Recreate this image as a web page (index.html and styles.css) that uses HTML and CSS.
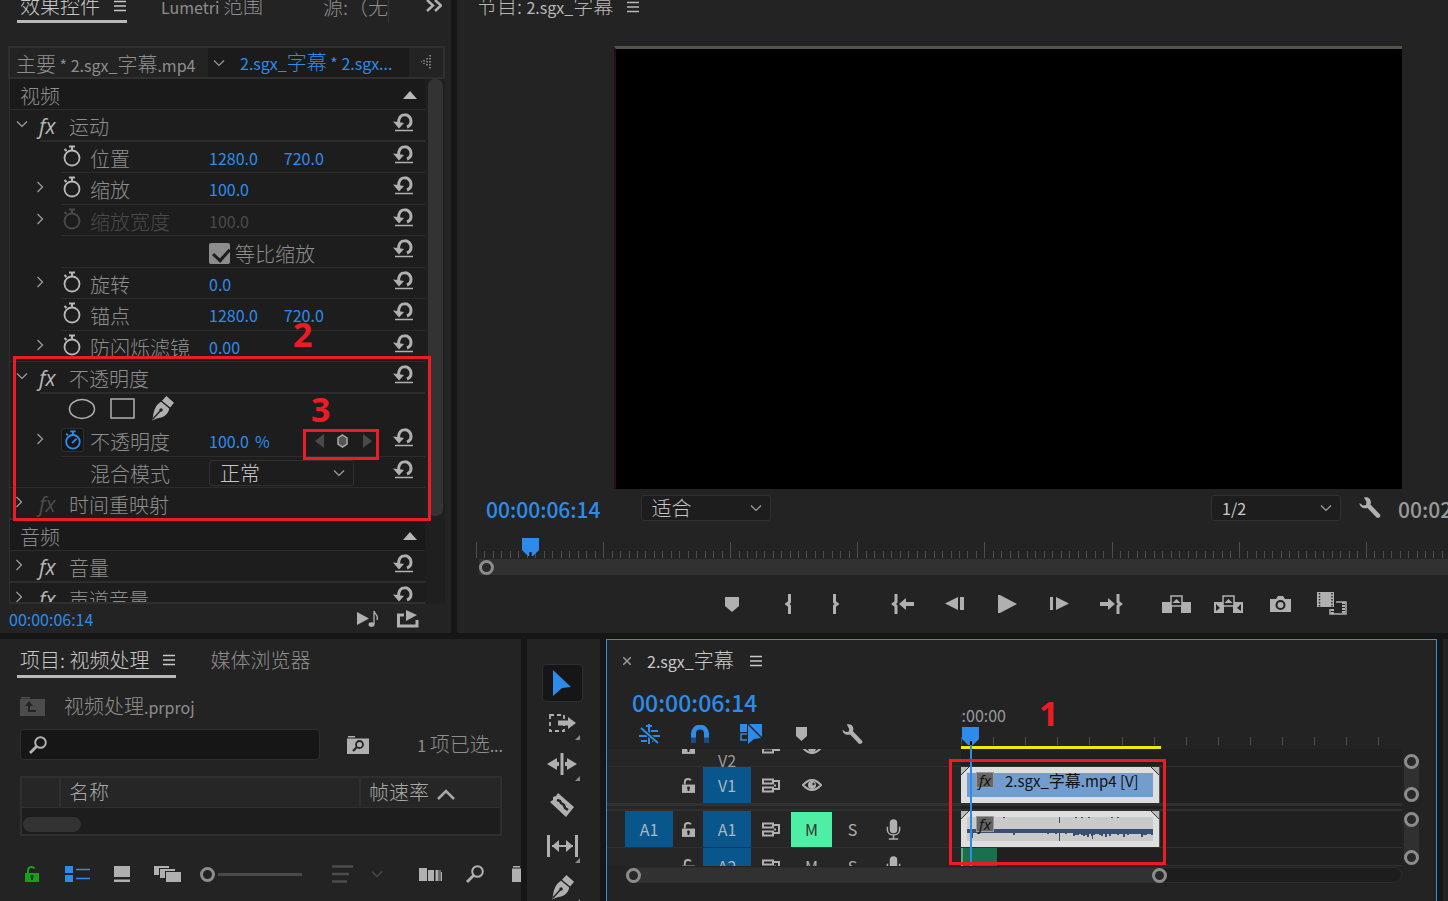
FILE: index.html
```html
<!DOCTYPE html>
<html lang="zh-CN">
<head>
  <meta charset="UTF-8" />
  <meta name="viewport" content="width=device-width, initial-scale=1.0">
  <title>视频处理</title>
  <link rel="stylesheet" href="styles.css">
</head>
<body>
  <svg class="defs" aria-hidden="true">
    <symbol id="reset" viewBox="0 0 20 19">
      <path d="M5.500 10C5.500 4.500 8 1.800 11.500 1.800a6.300 6.300 0 0 1 6.500 6.500c0 3-1.500 4.800-4 5.700" fill="none" stroke="currentColor" stroke-width="3"/>
      <path d="M0 8.500l5 .5 6 1-5 5.500z" fill="currentColor"/>
      <path d="M2 17.500h18" stroke="currentColor" stroke-width="1.500"/>
    </symbol>
    <symbol id="watch" viewBox="0 0 19 22">
      <circle cx="10" cy="13" r="7.500" fill="none" stroke="currentColor" stroke-width="1.800"/>
      <path d="M7 1.500h6M10 1.500v4M2.500 4l2 2" stroke="currentColor" stroke-width="2"/>
    </symbol>
    <symbol id="watch-on" viewBox="0 0 19 22">
      <circle cx="10" cy="13" r="7.500" fill="none" stroke="currentColor" stroke-width="2"/>
      <path d="M7 1.500h6M10 1.500v4M2.500 4l2 2M9 14.500l5-5" stroke="currentColor" stroke-width="2"/>
    </symbol>
    <symbol id="menu" viewBox="0 0 12 12">
      <path d="M0 1.500h12M0 6h12M0 10.500h12" stroke="currentColor" stroke-width="1.500"/>
    </symbol>
    <symbol id="down" viewBox="0 0 12 12">
      <path d="M1 3.500l5 5 5-5" fill="none" stroke="currentColor" stroke-width="1.200"/>
    </symbol>
    <symbol id="right" viewBox="0 0 12 12">
      <path d="M3.500 1l5 5-5 5" fill="none" stroke="currentColor" stroke-width="1.200"/>
    </symbol>
    <symbol id="up" viewBox="0 0 14 8"><path d="M7 0l7 8H0z" fill="currentColor"/></symbol>
    <symbol id="pen" viewBox="0 0 26 26">
      <path d="M17 0l8 7-4 5-8.500-7z" fill="currentColor"/>
      <path d="M11.500 6l8.500 7c-1 6-5 9-11.500 10L2 25.500l1-3.500c1-7 3-13 8.500-16z" fill="currentColor"/>
      <path d="M2.500 24.500l8.500-9.500" stroke="#232323" stroke-width="1.500"/>
      <circle cx="11.500" cy="14.500" r="1.800" fill="#232323"/>
    </symbol>
    <symbol id="search" viewBox="0 0 18 18">
      <circle cx="11.500" cy="6.500" r="5.300" fill="none" stroke="currentColor" stroke-width="2"/>
      <path d="M7.500 10.500L1 17" stroke="currentColor" stroke-width="2.800"/>
    </symbol>
    <symbol id="marker" viewBox="0 0 14 15"><path d="M0 0h14v9l-7 6-7-6z" fill="currentColor"/></symbol>
    <symbol id="wrench" viewBox="0 0 22 22">
      <path d="M5 .5C10-.5 13 3 11.500 7.500L21 17.500c1.500 2-1.500 4.500-3.500 3L8.500 11C4.500 12 .5 10 .5 6l3.500 2.500 3-.5.500-3z" fill="currentColor"/>
    </symbol>
    <symbol id="lock" viewBox="0 0 14 16">
      <path d="M3 7V4.500C3 2 4.500 1 6.500 1c1.500 0 2.500.500 3 1.500" fill="none" stroke="currentColor" stroke-width="2"/>
      <path d="M0 7h14v9H0z" fill="currentColor"/>
      <path d="M7 9v5M5.500 10.500h3" stroke="#222" stroke-width="2"/>
    </symbol>
    <symbol id="sync" viewBox="0 0 18 15">
      <path d="M1 1.500h10v4H1zM1 9.500h10v4H1z" fill="none" stroke="currentColor" stroke-width="2"/>
      <path d="M12 3h5v8h-5M12 7.500h2" fill="none" stroke="currentColor" stroke-width="2"/>
    </symbol>
    <symbol id="eye" viewBox="0 0 20 12">
      <path d="M1 6q9-10 18 0-9 10-18 0z" fill="none" stroke="currentColor" stroke-width="2"/>
      <circle cx="10" cy="6" r="4" fill="currentColor"/><circle cx="11.500" cy="5" r="1.200" fill="#222"/>
    </symbol>
    <symbol id="mic" viewBox="0 0 16 22">
      <rect x="4" y="0" width="8" height="15" rx="4" fill="currentColor"/>
      <path d="M1.500 8v3.500c0 7 13 7 13 0V8M8 17v3.500M3 21h10" fill="none" stroke="currentColor" stroke-width="1.600"/>
    </symbol>
  </svg>

  <main class="workspace">
    <div class="row row-top">
      <section class="panel effects">
        <div class="tabs tabs-cut">
          <a class="tab active" href="#"><span class="cn">效果控件</span><svg class="i12"><use href="#menu"/></svg></a>
          <a class="tab tab-lumetri" href="#"><span>Lumetri <span class="cn">范围</span></span></a>
          <a class="tab tab-source" href="#"><span class="cn">源:（无</span></a>
          <button class="more" aria-label="更多"><svg width="16" height="12" viewBox="0 0 16 12"><path d="M1 0l6 5.500L1 11M9 0l6 5.500L9 11" fill="none" stroke="currentColor" stroke-width="2.500"/></svg></button>
        </div>
        <div class="clip-bar">
          <span class="clip-master"><span class="cn">主要</span> * 2.sgx_<span class="cn">字幕</span>.mp4</span>
          <span class="clip-current"><svg class="i12"><use href="#down"/></svg><span>2.sgx_<span class="cn">字幕</span> * 2.sgx...</span></span>
          <span class="clip-more"><svg width="10" height="14" viewBox="0 0 10 14"><path d="M9 0v14M6 3v8M3 5v4M0 6v2" stroke="#999" stroke-width="1.500" stroke-dasharray="1.500 1.500"/></svg></span>
        </div>
        <div class="list-wrap">
          <div class="list">
            <div class="item head"><span class="cn">视频</span><svg class="tri"><use href="#up"/></svg></div>
            <div class="item fx"><svg class="tw"><use href="#down"/></svg><i>fx</i><span class="cn">运动</span><button class="rs" aria-label="重置"><svg><use href="#reset"/></svg></button></div>
            <div class="item prop"><span></span><svg class="sw"><use href="#watch"/></svg><span class="cn">位置</span><span class="vals"><a href="#">1280.0</a><a href="#">720.0</a></span><button class="rs" aria-label="重置"><svg><use href="#reset"/></svg></button></div>
            <div class="item prop"><svg class="tw"><use href="#right"/></svg><svg class="sw"><use href="#watch"/></svg><span class="cn">缩放</span><span class="vals"><a href="#">100.0</a></span><button class="rs" aria-label="重置"><svg><use href="#reset"/></svg></button></div>
            <div class="item prop off"><svg class="tw"><use href="#right"/></svg><svg class="sw"><use href="#watch"/></svg><span class="cn">缩放宽度</span><span class="vals">100.0</span><button class="rs" aria-label="重置"><svg><use href="#reset"/></svg></button></div>
            <div class="item prop"><span></span><span></span><span></span><label class="check"><input type="checkbox" checked><span class="cn">等比缩放</span></label><button class="rs" aria-label="重置"><svg><use href="#reset"/></svg></button></div>
            <div class="item prop"><svg class="tw"><use href="#right"/></svg><svg class="sw"><use href="#watch"/></svg><span class="cn">旋转</span><span class="vals"><a href="#">0.0</a></span><button class="rs" aria-label="重置"><svg><use href="#reset"/></svg></button></div>
            <div class="item prop"><span></span><svg class="sw"><use href="#watch"/></svg><span class="cn">锚点</span><span class="vals"><a href="#">1280.0</a><a href="#">720.0</a></span><button class="rs" aria-label="重置"><svg><use href="#reset"/></svg></button></div>
            <div class="item prop last"><svg class="tw"><use href="#right"/></svg><svg class="sw"><use href="#watch"/></svg><span class="cn">防闪烁滤镜</span><span class="vals"><a href="#">0.00</a></span><button class="rs" aria-label="重置"><svg><use href="#reset"/></svg></button></div>
            <div class="item fx"><svg class="tw"><use href="#down"/></svg><i>fx</i><span class="cn">不透明度</span><button class="rs" aria-label="重置"><svg><use href="#reset"/></svg></button></div>
            <div class="item masks">
              <button aria-label="椭圆蒙版"><svg width="28" height="22" viewBox="0 0 28 22"><ellipse cx="14" cy="11" rx="12.500" ry="9.500" fill="none" stroke="currentColor" stroke-width="1.500"/></svg></button>
              <button aria-label="矩形蒙版"><svg width="26" height="22" viewBox="0 0 26 22"><path d="M1 1h23v19H1z" fill="none" stroke="currentColor" stroke-width="1.500"/></svg></button>
              <button aria-label="钢笔蒙版"><svg width="25" height="25"><use href="#pen"/></svg></button>
            </div>
            <div class="item prop"><svg class="tw"><use href="#right"/></svg><svg class="sw sw-on"><use href="#watch-on"/></svg><span class="cn">不透明度</span><span class="vals"><a href="#">100.0</a><span class="pct">%</span>
              <span class="keys"><svg width="60" height="16" viewBox="0 0 60 16"><path d="M9 1v14L0 8zM48 1v14l9-7z" fill="#4a4a4a"/><path d="M27.500 2L32 5v6l-4.500 3L23 11V5z" fill="#555" stroke="#aaa" stroke-width="1.500"/></svg></span></span><button class="rs" aria-label="重置"><svg><use href="#reset"/></svg></button></div>
            <div class="item prop last"><span></span><span></span><label class="cn" for="blend">混合模式</label><span class="pick pick-blend"><select id="blend" class="cn"><option>正常</option></select><svg class="i12"><use href="#down"/></svg></span><button class="rs" aria-label="重置"><svg><use href="#reset"/></svg></button></div>
            <div class="item fx full"><svg class="tw"><use href="#right"/></svg><i class="dim">fx</i><span class="cn">时间重映射</span></div>
            <div class="item head"><span class="cn">音频</span><svg class="tri"><use href="#up"/></svg></div>
            <div class="item fx full"><svg class="tw"><use href="#right"/></svg><i>fx</i><span class="cn">音量</span><button class="rs" aria-label="重置"><svg><use href="#reset"/></svg></button></div>
            <div class="item fx full"><svg class="tw"><use href="#right"/></svg><i>fx</i><span class="cn">声道音量</span><button class="rs" aria-label="重置"><svg><use href="#reset"/></svg></button></div>
          </div>
          <div class="vscroll"><div class="vthumb"></div></div>
        </div>
        <div class="effects-foot">
          <span class="blue">00:00:06:14</span>
          <button aria-label="播放音频"><svg width="22" height="18" viewBox="0 0 22 18"><path d="M0 2l12 6.500L0 15z" fill="currentColor"/><path d="M17 1v13M17 1c1 4 5 4 3 9" fill="none" stroke="currentColor" stroke-width="1.300"/><ellipse cx="14.500" cy="14.500" rx="3" ry="2.300" fill="currentColor"/></svg></button>
          <button aria-label="导出"><svg width="22" height="18" viewBox="0 0 22 18"><path d="M7 5H1.500v11h18.500v-6" fill="none" stroke="currentColor" stroke-width="3"/><path d="M9 0l11 5-11 6z" fill="currentColor"/></svg></button>
        </div>
        <div class="mark mark-opacity"></div>
        <div class="mark mark-keys"></div>
        <b class="num num-2">2</b>
        <b class="num num-3">3</b>
      </section>

      <section class="panel program">
        <div class="tabs tabs-cut program-tabs"><span class="tab"><span><span class="cn">节目: </span>2.sgx_<span class="cn">字幕</span></span><svg class="i12"><use href="#menu"/></svg></span></div>
        <div class="video"></div>
        <div class="program-bar">
          <span class="tc">00:00:06:14</span>
          <span class="pick pick-fit"><select class="cn" aria-label="缩放级别"><option>适合</option></select><svg class="i12"><use href="#down"/></svg></span>
          <span class="pick pick-res"><select aria-label="回放分辨率"><option>1/2</option></select><svg class="i12"><use href="#down"/></svg></span>
          <button aria-label="设置"><svg width="22" height="22"><use href="#wrench"/></svg></button>
          <span class="tc gray">00:02:20:00</span>
        </div>
        <div class="ruler program-ruler">
          <svg id="programRuler" width="100%" height="16"></svg>
          <svg class="head" width="17" height="18" viewBox="0 0 17 18"><path d="M0 0h17v12l-6 6H6l-6-6z" fill="#2d8ceb"/><path d="M8.500 14v4" stroke="#000" stroke-width="2"/></svg>
        </div>
        <div class="hscroll program-scroll"><span class="knob"></span></div>
        <div class="transport">
          <div class="grp one"><button aria-label="添加标记"><svg width="14" height="15"><use href="#marker"/></svg></button></div>
          <div class="grp two">
            <button aria-label="标记入点"><svg width="8" height="20" viewBox="0 0 8 20"><path d="M5.500 0v8L3 10l2.500 2v8" fill="none" stroke="currentColor" stroke-width="3"/></svg></button>
            <button aria-label="标记出点"><svg width="8" height="20" viewBox="0 0 8 20"><path d="M2.500 0v8L5 10l-2.500 2v8" fill="none" stroke="currentColor" stroke-width="3"/></svg></button>
          </div>
          <div class="grp three">
            <button aria-label="转到入点"><svg width="24" height="20" viewBox="0 0 24 20"><path d="M5 0v8l-2.500 2L5 12v8" fill="none" stroke="currentColor" stroke-width="3"/><path d="M8 10l7-6v4h8v4h-8v4z" fill="currentColor"/></svg></button>
            <button aria-label="后退一帧"><svg width="20" height="14" viewBox="0 0 20 14"><path d="M13 0v13L0 6.500zM15 0h4v13h-4z" fill="currentColor"/></svg></button>
            <button aria-label="播放"><svg width="19" height="18" viewBox="0 0 19 18"><path d="M0 0h2l17 9-17 9H0z" fill="currentColor"/></svg></button>
            <button aria-label="前进一帧"><svg width="20" height="14" viewBox="0 0 20 14"><path d="M7 0v13l13-6.500zM1 0h3v13H1z" fill="currentColor"/></svg></button>
            <button aria-label="转到出点"><svg width="24" height="20" viewBox="0 0 24 20"><path d="M19 0v8l2.500 2-2.500 2v8" fill="none" stroke="currentColor" stroke-width="3"/><path d="M16 10L9 4v4H1v4h8v4z" fill="currentColor"/></svg></button>
          </div>
          <div class="grp four">
            <button aria-label="提升"><svg width="29" height="18" viewBox="0 0 29 18"><path d="M0 7h10v11H0zM19 7h10v11H19z" fill="currentColor"/><path d="M9 1h11v10H9z" fill="#232323" stroke="currentColor" stroke-width="1.500"/><path d="M14.500 4l4 4h-8z" fill="currentColor"/></svg></button>
            <button aria-label="提取"><svg width="29" height="18" viewBox="0 0 29 18"><path d="M0 7h10v11H0zM19 7h10v11H19z" fill="currentColor"/><path d="M9 1h11v10H9z" fill="#232323" stroke="currentColor" stroke-width="1.500"/><path d="M14.500 4l4 4h-8z" fill="currentColor"/><path d="M2 9l4 4-4 3zM27 9l-4 4 4 3z" fill="#232323"/></svg></button>
            <button aria-label="导出帧"><svg width="21" height="18" viewBox="0 0 21 18"><path d="M0 4h6l2-3h5l2 3h6v13H0z" fill="currentColor"/><circle cx="10.500" cy="10" r="4" fill="none" stroke="#232323" stroke-width="2"/></svg></button>
            <button aria-label="比较视图"><svg width="30" height="24" viewBox="0 0 30 24"><path d="M0 0h17v15H0z" fill="currentColor"/><path d="M2.500 1v14M15 1v14" stroke="#232323" stroke-width="1.500" stroke-dasharray="1.500 1.500"/><path d="M19 10h10v12H13v-5" fill="none" stroke="currentColor" stroke-width="1.500"/><path d="M15.500 17v6M26.500 10v12" stroke="currentColor" stroke-width="3" stroke-dasharray="2 1"/></svg></button>
          </div>
        </div>
      </section>
    </div>

    <div class="row row-bottom">
      <section class="panel project">
        <div class="tabs">
          <a class="tab active" href="#"><span class="cn">项目: 视频处理</span><svg class="i12"><use href="#menu"/></svg></a>
          <a class="tab tab-browser" href="#"><span class="cn">媒体浏览器</span></a>
        </div>
        <div class="crumb">
          <svg width="25" height="20" viewBox="0 0 25 20"><path d="M1 1h9v1.500H1zM0 3h25v17H0z" fill="#4c4c4c"/><path d="M9 7v8h7" fill="none" stroke="#232323" stroke-width="2"/><path d="M5 10l4-5 4 5z" fill="#232323"/></svg>
          <span><span class="cn">视频处理</span>.prproj</span>
        </div>
        <div class="find">
          <label class="search"><svg width="18" height="18"><use href="#search"/></svg><input type="text" aria-label="搜索"></label>
          <button aria-label="搜索素材箱"><svg width="22" height="18" viewBox="0 0 22 18"><path d="M1 0h7v1.500H1zM0 2.500h22V18H0z" fill="currentColor"/><circle cx="12.500" cy="8.500" r="3.500" fill="none" stroke="#232323" stroke-width="1.800"/><path d="M10 11l-4 4" stroke="#232323" stroke-width="2.200"/></svg></button>
          <span class="count">1 <span class="cn">项已选</span>...</span>
        </div>
        <table class="bin">
          <thead><tr><th class="c-icon"></th><th class="c-name cn">名称</th><th class="c-rate cn">帧速率 <svg width="18" height="11" viewBox="0 0 18 11"><path d="M1 10l8-8 8 8" fill="none" stroke="currentColor" stroke-width="2.500"/></svg></th></tr></thead>
          <tbody><tr><td colspan="3"><div class="bin-thumb"></div></td></tr></tbody>
        </table>
        <div class="project-tools">
          <button class="green" aria-label="锁定"><svg width="14" height="16"><use href="#lock"/></svg></button>
          <button class="blue" aria-label="列表视图"><svg width="25" height="16" viewBox="0 0 25 16"><path d="M0 0h8v7H0zM0 9h8v7H0z" fill="currentColor"/><path d="M11 3.500h14M11 12.500h14" stroke="currentColor" stroke-width="1.500"/></svg></button>
          <button aria-label="图标视图"><svg width="16" height="16" viewBox="0 0 16 16"><path d="M0 0h16v11H0zM0 13.500h16V16H0z" fill="currentColor"/></svg></button>
          <button aria-label="自由变换视图"><svg width="27" height="16" viewBox="0 0 27 16"><path d="M0 0h15v2H5v7H0z" fill="currentColor"/><path d="M6 3h15v2H11v7H6z" fill="currentColor"/><path d="M12 6h15v10H12z" fill="currentColor"/></svg></button>
          <input class="zoom" type="range" min="0" max="100" value="0" aria-label="缩放">
          <button class="dim sort" aria-label="排序"><svg width="21" height="18" viewBox="0 0 21 18"><path d="M0 1.500h21M0 9h17M0 16.500h15" stroke="currentColor" stroke-width="2.500"/></svg><svg class="i12"><use href="#down"/></svg></button>
          <button aria-label="自动匹配序列"><svg width="23" height="13" viewBox="0 0 23 13"><path d="M0 0h8v13H0zM9 2h6v11H9zM16.500 2h3v11h-3zM20.500 2h1v11h-1zM22 4h1v9h-1z" fill="currentColor"/></svg></button>
          <button aria-label="查找"><svg width="18" height="18"><use href="#search"/></svg></button>
          <button aria-label="新建素材箱"><svg width="21" height="16" viewBox="0 0 21 16"><path d="M1 0h7v1.500H1zM0 2.500h21V16H0z" fill="currentColor"/></svg></button>
        </div>
      </section>

      <section class="panel tools">
        <button class="tool on" aria-label="选择工具"><svg width="18" height="26" viewBox="0 0 18 26"><path d="M0 0l18 17-9 1-9 8z" fill="currentColor"/></svg></button>
        <button class="tool sub" aria-label="向前选择轨道工具"><svg width="27" height="18" viewBox="0 0 27 18"><path d="M1 1h14v16H1z" fill="none" stroke="currentColor" stroke-width="1.800" stroke-dasharray="4 3"/><path d="M9 6.500h10V3l8 6-8 6v-3.500H9z" fill="currentColor"/></svg></button>
        <button class="tool sub" aria-label="波纹编辑工具"><svg width="30" height="22" viewBox="0 0 30 22"><path d="M0 11l10-6v4h10V5l10 6-10 6v-4H10v4z" fill="currentColor"/><path d="M12 0h6v22h-6z" fill="#232323"/><path d="M13.500 0h3v22h-3z" fill="currentColor"/></svg></button>
        <button class="tool" aria-label="剃刀工具"><svg width="24" height="24" viewBox="0 0 24 24"><path d="M8 0l16 14-8 10L0 9l3-2v-3l3-1z" fill="currentColor"/><path d="M7 7l3 1 1 2 3 2 1 3 3 2" fill="none" stroke="#232323" stroke-width="2.500"/></svg></button>
        <button class="tool sub" aria-label="外滑工具"><svg width="31" height="22" viewBox="0 0 31 22"><path d="M0 0h3v22H0zM28 0h3v22h-3z" fill="currentColor"/><path d="M5 11h21" stroke="currentColor" stroke-width="2"/><path d="M5 11l7-6v12zM26 11l-7-6v12z" fill="currentColor"/></svg></button>
        <button class="tool sub" aria-label="钢笔工具"><svg width="25" height="25"><use href="#pen"/></svg></button>
      </section>

      <section class="panel timeline">
        <div class="tl-tabs"><button class="close" aria-label="关闭"><svg width="8" height="8" viewBox="0 0 8 8"><path d="M0 0l8 8M8 0L0 8" stroke="currentColor" stroke-width="1.500"/></svg></button><span>2.sgx_<span class="cn">字幕</span></span><svg class="i12"><use href="#menu"/></svg></div>
        <div class="tl-top">
          <div class="tl-ctl">
            <span class="tc big">00:00:06:14</span>
            <div class="tl-btns">
              <button class="blue" aria-label="嵌套"><svg width="22" height="20" viewBox="0 0 22 20"><path d="M11 0v20M1 12h8M13 7h7M14 12h8M3 17h6M14 17h5" stroke="currentColor" stroke-width="2"/><path d="M2 3l18 16" stroke="#232323" stroke-width="4"/><path d="M3 4l17 15M8 2h6" stroke="currentColor" stroke-width="2"/></svg></button>
              <button class="blue" aria-label="对齐"><svg width="18" height="18" viewBox="0 0 18 18"><path d="M2.500 18V8.500a6.500 6.500 0 0 1 13 0V18" fill="none" stroke="currentColor" stroke-width="5"/><path d="M0 12.500h5V18H0zM13 12.500h5V18h-5z" fill="#1c4a80"/></svg></button>
              <button class="blue" aria-label="链接选择项"><svg width="22" height="20" viewBox="0 0 22 20"><path d="M0 0h7v8H0zM9 0h13v13z" fill="currentColor"/><path d="M7 10H1v6h6" fill="none" stroke="currentColor" stroke-width="1.500"/><path d="M8 1l13 13-7 1-6 5z" fill="currentColor"/></svg></button>
              <button aria-label="添加标记"><svg width="11" height="14" viewBox="0 0 11 14"><path d="M0 0h11v9l-5.500 5L0 9z" fill="currentColor"/></svg></button>
              <button aria-label="时间轴显示设置"><svg width="21" height="21"><use href="#wrench"/></svg></button>
            </div>
          </div>
          <div class="tl-ruler">
            <div class="tl-time"><span>00:00:00</span></div>
            <svg id="timelineRuler" width="100%" height="10"></svg>
            <div class="work"></div>
          </div>
        </div>
        <div class="tracks">
          <div class="track cut-top"><span></span><svg class="lk"><use href="#lock"/></svg><span class="tgt plain">V2</span><svg class="sy"><use href="#sync"/></svg><svg class="ey"><use href="#eye"/></svg></div>
          <div class="track"><span></span><svg class="lk"><use href="#lock"/></svg><button class="tgt">V1</button><svg class="sy"><use href="#sync"/></svg><svg class="ey"><use href="#eye"/></svg></div>
          <div class="split"></div>
          <div class="track"><button class="tgt">A1</button><svg class="lk"><use href="#lock"/></svg><button class="tgt">A1</button><svg class="sy"><use href="#sync"/></svg><button class="mute">M</button><button class="solo">S</button><svg class="mc"><use href="#mic"/></svg></div>
          <div class="track cut-bottom"><span></span><svg class="lk"><use href="#lock"/></svg><button class="tgt">A2</button><svg class="sy"><use href="#sync"/></svg><span class="solo">M</span><span class="solo">S</span><svg class="mc"><use href="#mic"/></svg></div>
        </div>
        <div class="lanes">
          <div class="lane cut"></div>
          <div class="lane"><div class="clip"><div class="clip-in video-in"><i class="badge">fx</i><span>2.sgx_<span class="cn">字幕</span>.mp4 [V]</span></div></div></div>
          <div class="split"></div>
          <div class="lane"><div class="clip"><div class="clip-in audio-in"><svg id="wave" width="186" height="24" viewBox="0 0 186 24"></svg><i class="badge">fx</i></div></div></div>
          <div class="lane cut"><div class="green-clip"></div></div>
        </div>
        <div class="knobs">
          <div class="bar bar-v"><span class="knob"></span><span class="knob"></span></div>
          <div class="bar bar-a"><span class="knob"></span><span class="knob"></span></div>
        </div>
        <div class="hscroll tl-scroll"><div class="tl-thumb"><span class="knob"></span><span class="knob"></span></div></div>
        <div class="playhead"><svg width="17" height="18" viewBox="0 0 17 18"><path d="M0 0h17v12l-6 6H6l-6-6z" fill="#2d8ceb"/><path d="M9 14v4" stroke="#000" stroke-width="2"/></svg></div>
        <div class="mark mark-clips"></div>
        <b class="num num-1">1</b>
      </section>
      <section class="panel edge"></section>
    </div>
  </main>

  <script>
    function rect(svg, x, y, w, h, fill) {
      const r = document.createElementNS('http://www.w3.org/2000/svg', 'rect');
      r.setAttribute('x', x);
      r.setAttribute('y', y);
      r.setAttribute('width', w);
      r.setAttribute('height', h);
      r.setAttribute('fill', fill);
      svg.appendChild(r);
    }

    // program monitor: 15 frames per long tick
    const pr = document.getElementById('programRuler');
    for (let i = 0; i < 300; i++) {
      const long = i % 15 === 0;
      rect(pr, Math.round(i * 127.1 / 15), long ? 0 : 9, 1, long ? 16 : 7, '#4e4e4e');
    }

    const tr = document.getElementById('timelineRuler');
    for (let i = 0; i < 14; i++) {
      rect(tr, Math.round(i * 32.1), 1, 1, 8, '#4e4e4e');
    }

    // audio waveform
    const wave = document.getElementById('wave');
    rect(wave, 0, 12, 186, 4, '#3a5070');
    const peaks = [0, 1, 0, 2, 1, 0, 1, 3, 1, 0, 2, 0, 1, 0, 0, 1];
    for (let x = 30; x < 186; x += 2) {
      const h = peaks[(x * 7 + (x >> 3)) % 16] + (x > 104 ? 2 : 0);
      rect(wave, x, 15, 2, h, '#3a5070');
    }
    rect(wave, 92, 0, 1, 6, '#3a5070');
    rect(wave, 92, 12, 1, 12, '#3a5070');
    rect(wave, 125, 12, 1, 10, '#3a5070');
    rect(wave, 5, 12, 1, 9, '#3a5070');
    [36, 108, 114, 121, 144, 150].forEach(x => rect(wave, x, 0, 2, 1, '#3a5070'));
  </script>
</body>
</html>
```

FILE: styles.css
```css
* {
  box-sizing: border-box;
}

body {
  margin: 0;
  background-color: #161616;
  color: #b0b0b0;
  font-family: "Noto Sans CJK SC", "Noto Sans", sans-serif;
  font-size: 16px;
  line-height: 24px;
  overflow: hidden;
}

a {
  color: inherit;
  text-decoration: none;
}

button {
  display: inline-flex;
  align-items: center;
  justify-content: center;
  padding: 0;
  border: none;
  background: none;
  color: #b0b0b0;
  font: inherit;
  flex: none;
}

svg {
  display: block;
  flex: none;
}

.defs {
  display: none;
}

.cn {
  font-size: 20px;
  font-weight: 300;
}

.blue {
  color: #2d8ceb;
}

.i12 {
  width: 12px;
  height: 12px;
}

.workspace {
  display: grid;
  grid-template-rows: minmax(0, 633fr) minmax(0, 262fr);
  gap: 6px;
  height: 100vh;
}

.row {
  display: grid;
  gap: 6px;
  min-height: 0;
}

.row-top {
  grid-template-columns: 451px minmax(0, 1fr);
}

.row-bottom {
  grid-template-columns: 521px 73px minmax(0, 1fr) 5px;
}

.panel {
  position: relative;
  display: flex;
  flex-direction: column;
  min-height: 0;
  overflow: hidden;
  background-color: #232323;
}

/* tabs */

.tabs {
  display: flex;
  align-items: flex-start;
  flex: none;
  white-space: nowrap;
  padding-left: 17px;
  color: #8e8e8e;
}

.tab {
  display: flex;
  align-items: center;
  gap: 14px;
  padding: 0 1px 0 3px;
}

.tab.active {
  color: #c8c8c8;
  border-bottom: 3px solid #b8b8b8;
}

.tabs-cut {
  height: 46px;
  line-height: 12px;
}

.tabs-cut .tab {
  height: 23px;
  padding-bottom: 10px;
}

.tabs-cut .tab.active {
  padding-bottom: 8px;
}

/* effect controls */

.tab-lumetri {
  margin-left: 31px;
}

.tab-source {
  width: 69px;
  margin-left: 56px;
  overflow: hidden;
  border-right: 1px solid #333;
}

.more {
  margin-left: 37px;
}

.clip-bar {
  display: flex;
  flex: none;
  height: 33px;
  margin: 0 6px 0 8px;
  border: 2px solid #2f2f2f;
  line-height: 32px;
  white-space: nowrap;
  color: #8e8e8e;
}

.clip-master {
  width: 198px;
  padding-left: 6px;
}

.clip-current {
  display: flex;
  align-items: center;
  gap: 15px;
  width: 201px;
  padding-left: 5px;
  background-color: #1b1b1b;
  color: #2d8ceb;
  line-height: 34px;
}

.clip-current .i12 {
  color: #9a9a9a;
}

.clip-more {
  flex: 1;
  padding: 7px 0 0 12px;
}

.list-wrap {
  display: flex;
  flex: 1;
  min-height: 0;
  margin: 0 6px 0 9px;
}

.list {
  flex: 1;
  overflow: hidden;
  background-color: #1d1d1d;
  border-left: 1px solid #2f2f2f;
  border-bottom: 2px solid #2f2f2f;
}

.item {
  display: grid;
  align-items: start;
  height: 32px;
  color: #8e8e8e;
  line-height: 34px;
  background: linear-gradient(#2c2c2c, #2c2c2c) no-repeat right bottom;
}

.item:nth-child(odd) {
  height: 31px;
}

.item > .cn {
  white-space: nowrap;
}

.head.item {
  grid-template-columns: 1fr 30px;
  padding-left: 10px;
  background-color: #1a1a1a;
  background-size: 100% 1px;
}

.tri {
  width: 14px;
  height: 8px;
  margin: 12px 0 0 8px;
  color: #b8b8b8;
}

.fx.item {
  grid-template-columns: 29px 30px 1fr 32px;
  background-size: calc(100% - 30px) 2px;
}

.full.item {
  background-size: 100% 2px;
}

.prop.item {
  grid-template-columns: 51px 29px 119px 1fr 32px;
  background-size: calc(100% - 51px) 1px;
}

.last.prop {
  background-size: 100% 1px;
}

.item i {
  font-family: "Open Sans", "Noto Sans", sans-serif;
  font-size: 21px;
  font-style: italic;
  line-height: 32px;
  color: #b8b8b8;
}

.item i.dim {
  color: #4c4c4c;
}

.tw {
  width: 12px;
  height: 12px;
  margin: 8px 0 0 6px;
  color: #a0a0a0;
}

.full .tw {
  margin-left: 3px;
}

.prop .tw {
  margin-left: 24px;
}

.sw {
  width: 19px;
  height: 22px;
  margin: 3px 0 0 1px;
  color: #b8b8b8;
}

.sw-on {
  margin: 3px 0 0 0;
  width: 23px;
  height: 24px;
  padding: 1px;
  border: 1px solid #2f2f2f;
  border-radius: 3px;
  background-color: #161616;
  color: #2d8ceb;
}

.rs {
  height: 19px;
  margin-top: 3px;
  justify-content: flex-start;
}

.rs svg {
  width: 20px;
  height: 19px;
}

.vals {
  display: flex;
  line-height: 32px;
  color: #2d8ceb;
}

.vals a + a {
  margin-left: 26px;
}

.off,
.off .vals,
.off .sw {
  color: #4a4a4a;
}

.pct {
  margin-left: 6px;
}

.keys {
  margin: 8px 0 0 45px;
}

.check {
  display: flex;
  align-items: center;
  gap: 5px;
  height: 35px;
}

.check input {
  appearance: none;
  width: 21px;
  height: 21px;
  margin: 0;
  border-radius: 2px;
  background-color: #8c8c8c;
}

.check input:checked::before {
  content: "";
  display: block;
  width: 8px;
  height: 13px;
  margin: 2px 0 0 7px;
  border: solid #1d1d1d;
  border-width: 0 3px 3px 0;
  transform: rotate(42deg);
}

.masks {
  display: flex;
  align-items: center;
  gap: 14px;
  padding: 0 0 2px 58px;
  background: none;
}

.pick {
  display: inline-flex;
  align-items: center;
  height: 26px;
  border: 1px solid #303030;
  border-radius: 3px;
  background-color: #1d1d1d;
}

.pick select {
  appearance: none;
  flex: 1;
  height: 24px;
  padding: 0 0 0 10px;
  border: none;
  background: none;
  color: #c8c8c8;
  font-family: inherit;
  font-size: 16px;
  line-height: 24px;
}

.pick select.cn {
  font-size: 20px;
}

.pick .i12 {
  margin-right: 8px;
  color: #a0a0a0;
}

.pick-blend {
  width: 145px;
  margin-top: 3px;
}

.vscroll {
  width: 20px;
  padding-left: 3px;
  background-color: #1f1f1f;
}

.vthumb {
  width: 15px;
  height: 437px;
  border-radius: 7px;
  background-color: #333;
}

.effects-foot {
  display: flex;
  align-items: center;
  flex: none;
  height: 29px;
  padding: 0 32px 0 9px;
}

.effects-foot .blue {
  flex: 1;
  line-height: 32px;
}

.effects-foot button + button {
  margin-left: 18px;
}

/* red annotations */

.mark {
  position: absolute;
  border: 3px solid #ed1c24;
}

.mark-opacity {
  left: 13px;
  top: 356px;
  width: 418px;
  height: 165px;
}

.mark-keys {
  left: 303px;
  top: 429px;
  width: 76px;
  height: 31px;
}

.mark-clips {
  left: 342px;
  top: 119px;
  width: 217px;
  height: 106px;
}

.num {
  position: absolute;
  font-family: "Noto Sans", sans-serif;
  font-size: 34px;
  line-height: 34px;
  color: #ed1c24;
}

.num-1 {
  left: 432px;
  top: 56px;
}

.num-2 {
  left: 293px;
  top: 317px;
}

.num-3 {
  left: 311px;
  top: 392px;
}

/* program monitor */

.program-tabs .tab {
  color: #b8b8b8;
}

.video {
  flex: 1;
  min-height: 0;
  margin: 0 46px 0 157px;
  border-top: 3px solid #55564a;
  border-left: 2px solid #2d0a24;
  background-color: #000;
}

.program-bar {
  display: flex;
  align-items: center;
  flex: none;
  height: 37px;
  padding-left: 29px;
  white-space: nowrap;
}

.tc {
  font-size: 21px;
  font-weight: 500;
  color: #2d8ceb;
}

.tc.gray {
  width: 50px;
  margin-left: 17px;
  overflow: hidden;
  color: #999;
}

.program-bar .tc {
  padding-top: 2px;
}

.pick-fit {
  width: 130px;
  margin-left: 40px;
}

.pick-res {
  width: 130px;
  margin-left: auto;
  margin-right: 18px;
}

.ruler {
  position: relative;
  flex: none;
  height: 33px;
  padding: 16px 0 0 19px;
}

.ruler .head {
  position: absolute;
  left: 65px;
  top: 12px;
}

.hscroll {
  display: flex;
  align-items: center;
  flex: none;
  height: 16px;
  background-color: #313131;
}

.knob {
  flex: none;
  width: 15px;
  height: 15px;
  border: 3px solid #8c8c8c;
  border-radius: 50%;
  background-color: #282828;
}

.program-scroll {
  margin-left: 22px;
}

.transport {
  display: flex;
  align-items: center;
  flex: none;
  height: 58px;
  padding-left: 249px;
}

.grp {
  display: flex;
}

.grp button {
  width: 52px;
  height: 30px;
}

.grp.two {
  margin: 0 17px 0 6px;
}

.grp.two button {
  width: 48px;
}

.grp.four {
  margin-left: 13px;
}

/* project */

.project .tabs {
  height: 48px;
}

.project .tab {
  height: 39px;
}

.project .tab.active {
  padding-top: 5px;
}

.project .tab-browser {
  margin-left: 31px;
  padding-top: 2px;
}

.crumb {
  display: flex;
  align-items: center;
  flex: none;
  gap: 19px;
  height: 38px;
  padding-left: 20px;
  color: #8e8e8e;
}

.find {
  display: flex;
  align-items: center;
  flex: none;
  height: 39px;
  padding: 0 18px 0 20px;
}

.search {
  display: flex;
  align-items: center;
  flex: 1;
  height: 31px;
  margin-right: 27px;
  padding-left: 8px;
  border: 1px solid #2e2e2e;
  border-radius: 4px;
  background-color: #161616;
}

.search input {
  flex: 1;
  min-width: 0;
  border: none;
  background: none;
  color: #b0b0b0;
  font: inherit;
}

.count {
  margin-left: 48px;
  color: #8e8e8e;
}

.bin {
  flex: none;
  width: 482px;
  height: 60px;
  margin: 12px 0 0 20px;
  border-collapse: collapse;
  table-layout: fixed;
  border: 2px solid #2f2f2f;
}

.bin th {
  height: 30px;
  padding: 0 0 0 8px;
  border-right: 2px solid #2f2f2f;
  border-bottom: 1px solid #2f2f2f;
  background-color: #262626;
  text-align: left;
  line-height: 28px;
  color: #a8a8a8;
}

.bin th svg {
  display: inline-block;
  margin-left: 4px;
}

.c-icon {
  width: 39px;
}

.c-rate {
  width: 141px;
}

.bin td {
  padding: 8px 0 0 1px;
  background-color: #1d1d1d;
}

.bin-thumb {
  width: 58px;
  height: 15px;
  border-radius: 8px;
  background-color: #333;
}

.project-tools {
  display: flex;
  align-items: center;
  flex: none;
  gap: 28px;
  margin-top: 23px;
  height: 30px;
  padding-left: 25px;
}

.project-tools button:nth-child(1) {
  margin-right: -2px;
}

.project-tools .green {
  color: #16a016;
}

.project-tools .blue {
  color: #2d8ceb;
  margin-right: -4px;
}

.project-tools button:nth-child(3) {
  margin-right: -4px;
}

.zoom {
  appearance: none;
  flex: none;
  width: 102px;
  height: 15px;
  margin: 0 0 0 -9px;
  background: linear-gradient(#4a4a4a, #4a4a4a) no-repeat right center / 84px 3px;
}

.zoom::-webkit-slider-thumb {
  appearance: none;
  width: 15px;
  height: 15px;
  border: 3px solid #8c8c8c;
  border-radius: 50%;
  background-color: #232323;
}

.project-tools .sort {
  gap: 18px;
  margin: 0 8px 0 2px;
  color: #4c4c4c;
}

.project-tools .sort + button {
  margin-right: -4px;
}

/* tools */

.tools {
  align-items: center;
  gap: 3px;
  padding: 25px 3px 0 0;
}

.tool {
  position: relative;
  width: 41px;
  height: 38px;
}

.tool.sub,
.tool:not(.on) {
  padding-bottom: 2px;
}

.tool.on {
  border: 1px solid #2e2e2e;
  border-radius: 4px;
  background-color: #161616;
  color: #2d8ceb;
}

.tool.sub::after {
  content: "";
  position: absolute;
  right: 3px;
  bottom: 3px;
  border-left: 5px solid transparent;
  border-bottom: 5px solid #8a8a8a;
}

/* timeline */

.timeline {
  display: grid;
  grid-template-columns: 354px minmax(0, 1fr) 34px;
  grid-template-rows: 48px 61px 117px 1px 16px 1fr;
  border: 1px solid #2d8ceb;
  border-bottom: none;
}

.tl-tabs {
  grid-column: 1 / -1;
  display: flex;
  align-items: center;
  gap: 16px;
  padding: 0 0 7px 16px;
  color: #c8c8c8;
}

.close {
  color: #999;
}

.tl-top {
  grid-column: 1 / -1;
  display: grid;
  grid-template-columns: 354px minmax(0, 1fr) 34px;
}

.tl-ctl {
  padding-left: 25px;
}

.tc.big {
  display: block;
  font-size: 23px;
  line-height: 28px;
}

.tl-btns {
  display: flex;
  align-items: center;
  margin: 6px 0 0 -9px;
}

.tl-btns button {
  width: 51px;
  height: 24px;
}

.tl-ruler {
  display: flex;
  flex-direction: column;
}

.tl-time {
  display: flex;
  justify-content: flex-end;
  width: 45px;
  height: 41px;
  padding-top: 15px;
  overflow: hidden;
  color: #999;
}

.tl-ruler svg {
  margin-top: 7px;
}

.work {
  width: 200px;
  height: 3px;
  background-color: #f2ea00;
}

.tracks,
.lanes {
  grid-row: 3;
  overflow: hidden;
  background-color: #262626;
}

.lanes {
  background-color: #202020;
}

.track {
  display: grid;
  grid-template-columns: 48px 30px 48px 40px 41px 41px 40px;
  align-items: center;
  justify-items: center;
  height: 37px;
  padding-left: 18px;
  color: #b0b0b0;
  border-bottom: 1px solid #303030;
}

.cut-top {
  grid-template-rows: 17px;
  height: 18px;
  align-items: end;
}

.cut-top svg {
  margin-bottom: 12px;
}

.tgt {
  width: 48px;
  height: 36px;
  background-color: #08568c;
  color: #a8b8c4;
}

.cut-top .tgt {
  height: 16px;
  line-height: 20px;
}

.tgt.plain {
  background: none;
  text-align: center;
  color: #999;
}

.lk {
  width: 13px;
  height: 15px;
}

.sy {
  width: 18px;
  height: 15px;
}

.ey {
  width: 20px;
  height: 12px;
}

.mc {
  width: 15px;
  height: 21px;
}

.mute {
  width: 41px;
  height: 35px;
  background-color: #4eefa5;
  color: #333;
}

.solo {
  color: #b0b0b0;
}

.split {
  height: 7px;
  border-top: 2px solid #303030;
  border-bottom: 2px solid #303030;
}

.lane {
  height: 37px;
  border-bottom: 1px solid #303030;
}

.lane.cut {
  height: 18px;
}

.clip {
  width: 199px;
  height: 36px;
  padding: 6px;
  border-right: 1px solid #555;
  background: linear-gradient(135deg, #bbb 5px, #333 5px, #333 6px, transparent 6px),
    linear-gradient(225deg, #bbb 5px, #333 5px, #333 6px, transparent 6px), #dedede;
}

.clip-in {
  display: flex;
  height: 24px;
  background-color: #739ccf;
  color: #111;
  font-size: 15px;
  line-height: 15px;
  white-space: nowrap;
}

.clip-in .cn {
  font-size: 16px;
  font-weight: 400;
}

.audio-in {
  background-color: #cacaca;
}

.audio-in svg {
  margin-right: -186px;
}

.badge {
  flex: none;
  width: 18px;
  height: 16px;
  margin: -1px 11px 0 9px;
  border: 1px solid #999;
  background-color: #666;
  font-family: "Noto Sans", sans-serif;
  font-size: 15px;
  line-height: 14px;
  text-align: center;
}

.green-clip {
  width: 36px;
  height: 18px;
  border-left: 2px solid #5fa98a;
  background-color: #18704c;
}

.knobs {
  grid-row: 3;
  grid-column: 3;
  padding-left: 2px;
}

.bar {
  display: flex;
  flex-direction: column;
  align-items: center;
  justify-content: space-between;
  width: 15px;
  border-radius: 7px;
  background-color: #303030;
}

.bar-v {
  height: 48px;
  margin-top: 5px;
}

.bar-a {
  height: 53px;
  margin-top: 10px;
}

.tl-scroll {
  grid-row: 5;
  grid-column: 1 / 3;
  margin-left: 18px;
  border: 1px solid #2c2c2c;
  border-radius: 8px;
  background-color: #1d1d1d;
}

.tl-thumb {
  display: flex;
  justify-content: space-between;
  width: 541px;
  border-radius: 8px;
  background-color: #313131;
}

.playhead {
  position: absolute;
  left: 355px;
  top: 87px;
  height: 139px;
  background: linear-gradient(#2d8ceb, #2d8ceb) no-repeat 8px 0 / 2px 100%;
}
```
